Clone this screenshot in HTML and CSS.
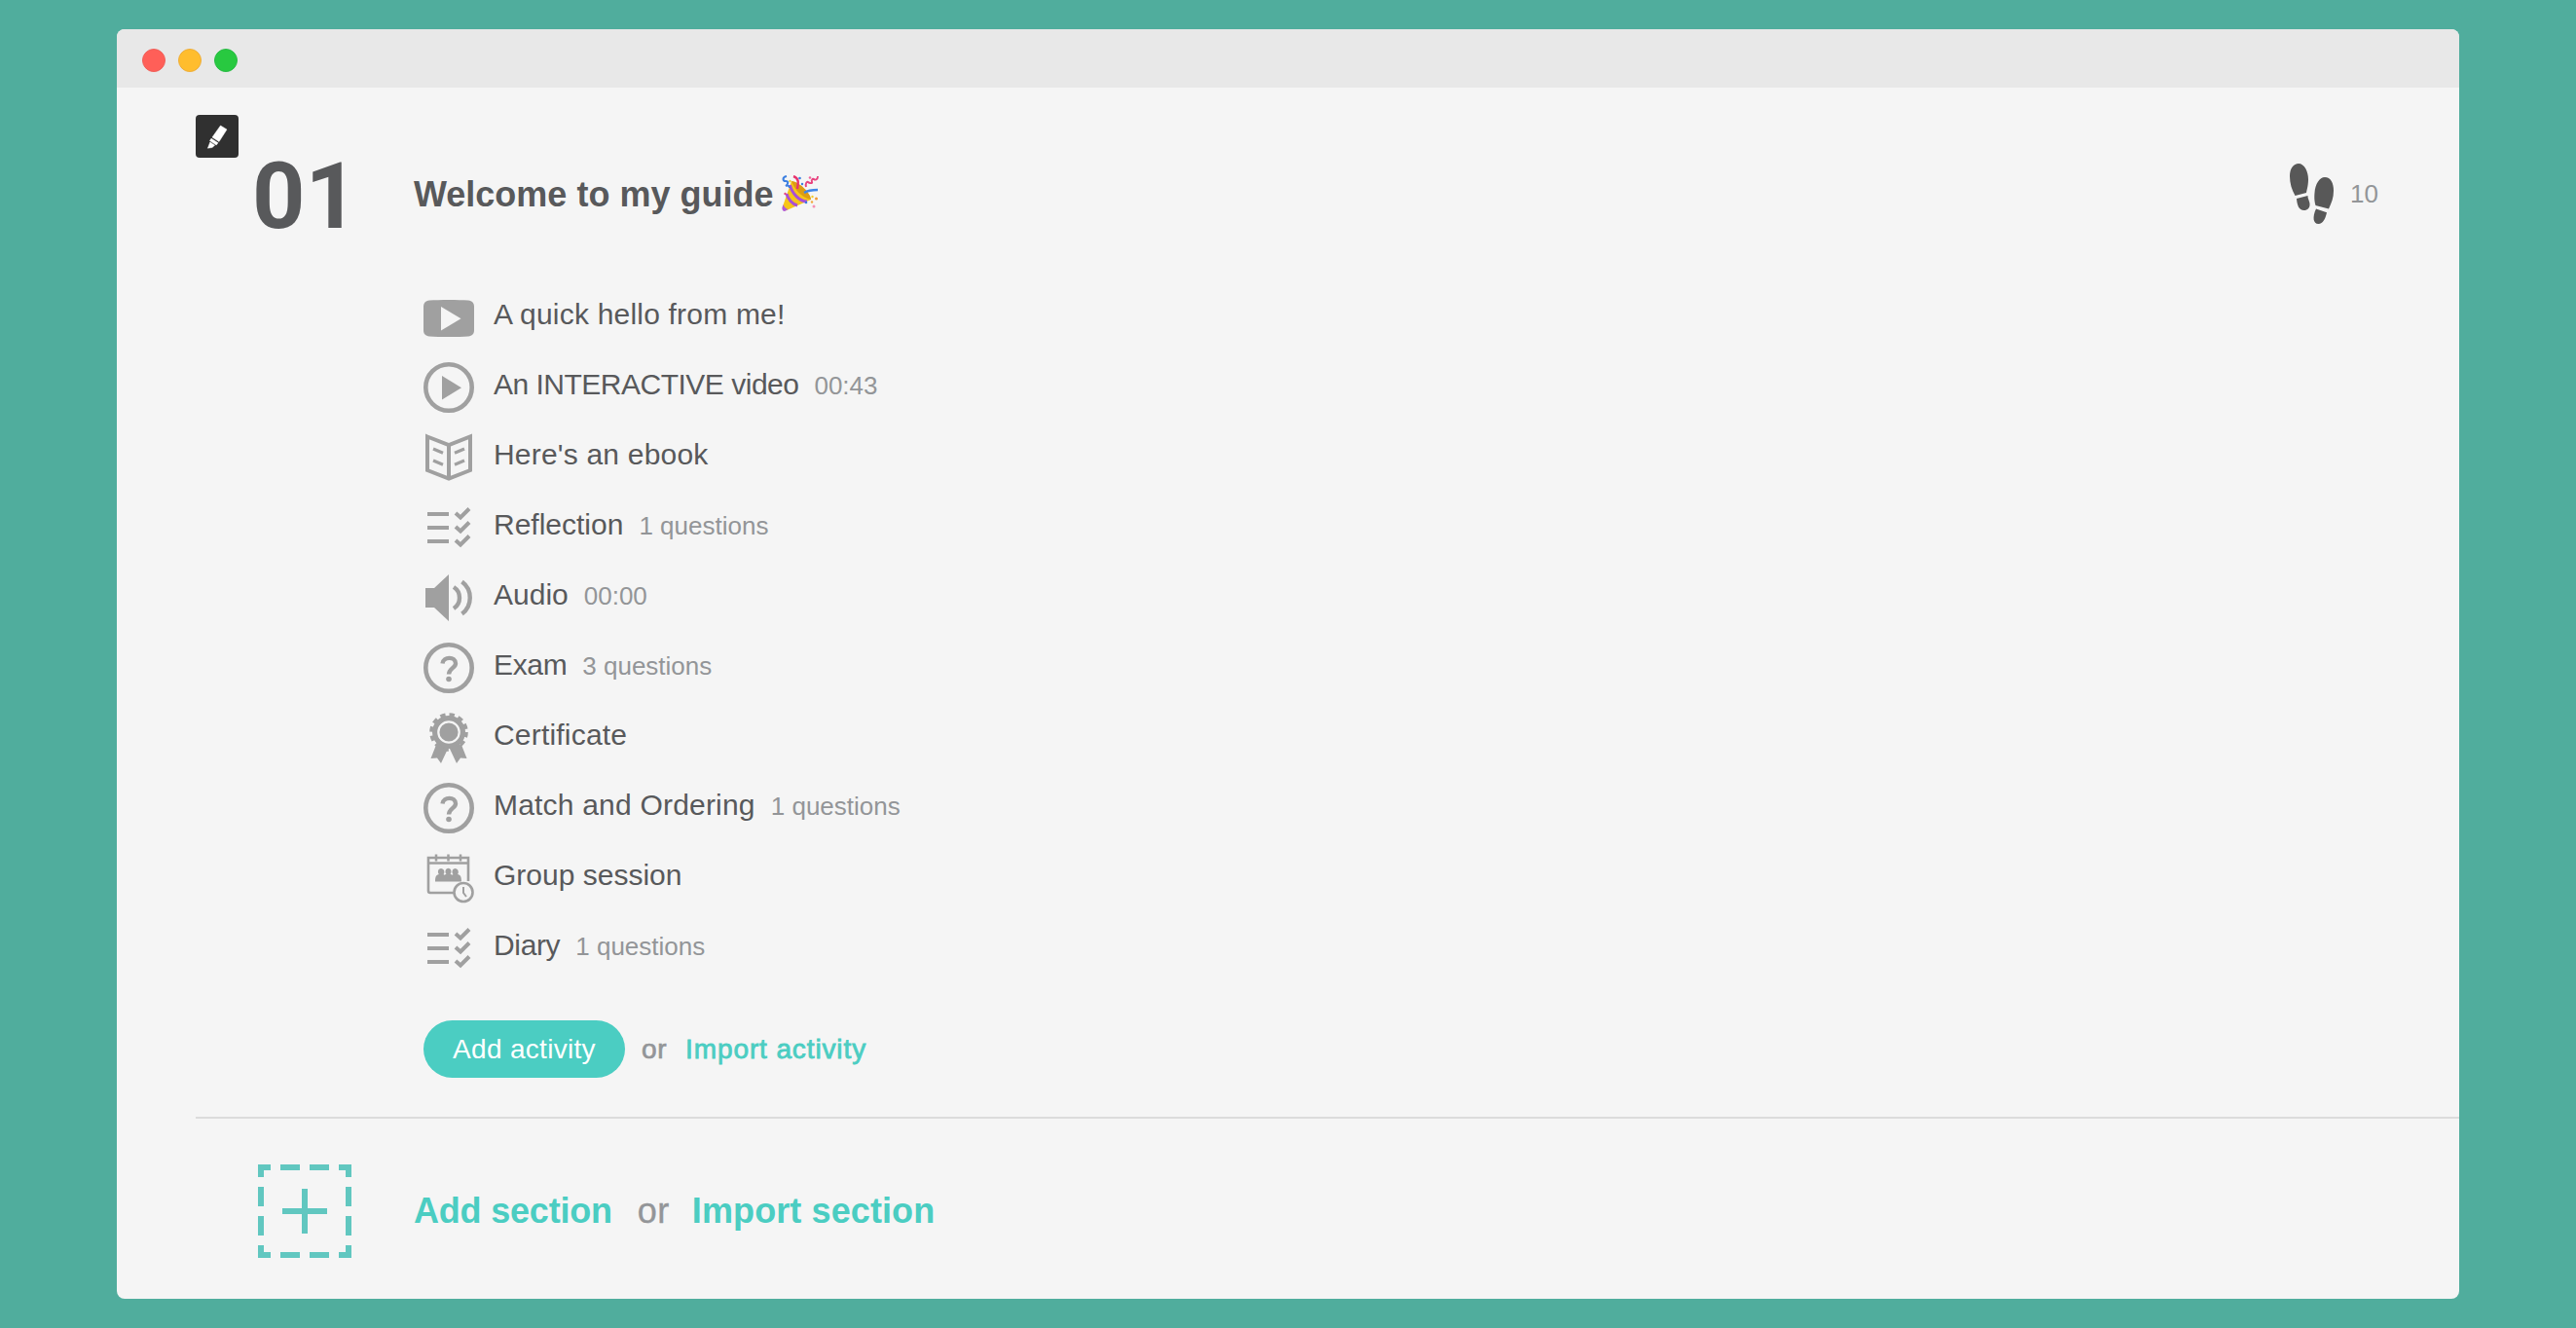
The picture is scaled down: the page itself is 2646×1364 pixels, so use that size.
FILE: index.html
```html
<!DOCTYPE html>
<html lang="en">
<head>
  <meta charset="UTF-8" />
  <meta name="viewport" content="width=device-width, initial-scale=1" />
  <title>Welcome to my guide</title>
  <link rel="stylesheet" href="styles.css">
</head>
<body>
  <svg class="sprite">
    <symbol id="icon-list" viewBox="0 0 52 52">
      <path d="M4 12h22M4 26h22M4 40h22M33 11l5 4.500 9-9M33 25l5 4.500 9-9M33 39l5 4.500 9-9" fill="none" stroke="currentColor" stroke-width="4" />
    </symbol>
    <symbol id="icon-question" viewBox="0 0 52 52">
      <circle cx="26" cy="26" r="23.700" fill="none" stroke="currentColor" stroke-width="4.600" />
      <path d="M19.500 21.500c.8-7.500 13.500-7.500 13.500 0 0 4.500-7 5-7 11" fill="none" stroke="currentColor" stroke-width="4.400" />
      <circle cx="26" cy="37.500" r="2.800" fill="currentColor" />
    </symbol>
  </svg>

  <main class="window">
    <div class="titlebar">
      <span class="dot red"></span>
      <span class="dot yellow"></span>
      <span class="dot green"></span>
    </div>

    <section class="section">
      <button class="edit-btn" aria-label="Edit">
        <svg viewBox="0 0 44 44">
          <path d="M25.500 11l6.500 4-8 12.500-7-4.500zM16 24.200l7 4.600-1.800 2.200-6.700-4.400zM14.800 28l4.800 3.200-2.600 2.300-4.600.700z" fill="#fff" stroke="#fff" stroke-width=".5" stroke-linejoin="round" />
        </svg>
      </button>

      <header class="section-header">
        <span class="number">01</span>
        <h1>Welcome to my guide</h1>
        <svg class="party" viewBox="0 0 38 38" aria-label="party popper">
          <path d="M10 6c7 2 17 11 20 19L5 36c-3 1-5-1-4-4z" fill="#f6c518" />
          <path d="M10 6c3 8 9 16 20 19 0-6-11-18-20-19z" fill="#dd9c12" />
          <path d="M8.500 10c2 9 10 17 17.500 17M5 19c1 5 6 11 11 12" fill="none" stroke="#a94fd6" stroke-width="3" />
          <path d="M1.500 30c1 2.500 2.500 4.500 5 5L3 37c-2 0-3-2-2.500-4z" fill="#b05ad8" />
          <path d="M12 1c6 2 5 7 4 13" fill="none" stroke="#e8336d" stroke-width="2.400" />
          <path d="M23 18c3-2 8-3 14-3" fill="none" stroke="#3f86e8" stroke-width="2.400" />
          <path d="M5 1c-5 1-4 5-1 5s3 3 0 5c2-1 4 0 4 2" fill="none" stroke="#3c7fe0" stroke-width="2" />
          <path d="M37 1c0 4-3 4-4 3s-3 1-2 3-3 1-4 0-3 1-2 5" fill="none" stroke="#e8437f" stroke-width="1.900" />
          <circle cx="18.500" cy="3" r="1.300" fill="#3c7fe0" />
          <circle cx="29" cy="2.500" r="1.300" fill="#f0649a" />
          <circle cx="21" cy="9" r="1.200" fill="#3c7fe0" />
          <circle cx="8.500" cy="6" r="1.200" fill="#e9d02c" />
          <circle cx="3.500" cy="19" r="1.200" fill="#e8437f" />
          <circle cx="31.500" cy="22" r="1.200" fill="#f3cd2b" />
          <circle cx="35.500" cy="24" r="1.500" fill="#f09a38" />
          <circle cx="25" cy="28" r="1.300" fill="#3c7fe0" />
          <circle cx="31" cy="27.500" r="1.200" fill="#f3a83b" />
          <circle cx="33" cy="32" r="1.500" fill="#f48fb5" />
        </svg>
        <div class="steps">
          <svg class="footprints" viewBox="0 0 46 62">
            <path d="M9 0c6 0 10 8 10 16 0 6-1 9-2 14L5.500 33C2 27 0 20 0 13 0 5 4 0 9 0zM7 36l11.500-3c0 4 2.500 6 2 10-.3 3-3 5-6 5-5 0-7-5-7.500-12z" fill="currentColor" />
            <path d="M36 14c6 0 9 6 9 14 0 7-2 12-5 18.500L26.500 43c-1-4-1.500-7-1-13 .6-9 5-16 10.500-16zM27 46.500l11 3.800C36.500 57 34 62 29.500 62 24 62 23 55 27 46.500z" fill="currentColor" />
          </svg>
          <span>10</span>
        </div>
      </header>

      <ul class="activities">
        <li>
          <svg viewBox="0 0 52 52"><path d="M6 8.500c10-.8 30-.8 40 0 4 .3 6 3 6 6.500v24c0 4-2 6-6 6.500-10 .8-30 .8-40 0-4-.5-6-2.500-6-6.500V15c0-3.500 2-6.200 6-6.500z" fill="currentColor" /><path d="M18 15v24.500l20.500-12.300z" fill="#f5f5f5" /></svg>
          <span class="label loose">A quick hello from me!</span>
        </li>
        <li>
          <svg viewBox="0 0 52 52"><circle cx="26" cy="26" r="23.700" fill="none" stroke="currentColor" stroke-width="4.600" /><path d="M19 14v24.500l20-12.300z" fill="currentColor" /></svg>
          <span class="label tight">An INTERACTIVE video</span>
          <span class="meta">00:43</span>
        </li>
        <li>
          <svg viewBox="0 0 52 52"><path d="M4 4.500L26 13l22-8.500v34.500L26 47.500 4 39zM26 13v34.500" fill="none" stroke="currentColor" stroke-width="4" /><path d="M10 17l10 4.200M10 29l10 4.200M42 17l-10 4.200M42 29l-10 4.200" fill="none" stroke="currentColor" stroke-width="3.200" /></svg>
          <span class="label loose">Here's an ebook</span>
        </li>
        <li>
          <svg><use href="#icon-list" /></svg>
          <span class="label">Reflection</span>
          <span class="meta">1 questions</span>
        </li>
        <li>
          <svg viewBox="0 0 52 52"><path d="M2 16h9L26 2v48L11 36H2z" fill="currentColor" /><path d="M31 15c8 5 8 17 0 22M39.500 9.500c11 8 11 25 0 33" fill="none" stroke="currentColor" stroke-width="4.400" /></svg>
          <span class="label">Audio</span>
          <span class="meta">00:00</span>
        </li>
        <li>
          <svg><use href="#icon-question" /></svg>
          <span class="label snug">Exam</span>
          <span class="meta">3 questions</span>
        </li>
        <li>
          <svg viewBox="0 0 52 52"><path d="M13 33L7.500 47l6.500-.5 4 5.500 7.500-16h1l7.500 16 4-5.500 6.500.5L39 33z" fill="currentColor" /><circle cx="26" cy="20" r="17" fill="currentColor" /><circle class="scallop" cx="26" cy="20" r="17.800" /><circle cx="26" cy="20" r="10.700" fill="none" stroke="#f5f5f5" stroke-width="2.200" /></svg>
          <span class="label loose">Certificate</span>
        </li>
        <li>
          <svg><use href="#icon-question" /></svg>
          <span class="label loose">Match and Ordering</span>
          <span class="meta">1 questions</span>
        </li>
        <li>
          <svg viewBox="0 0 52 52">
            <path d="M31 41H7q-2 0-2-2V5h41v24M5 10.500h41" fill="none" stroke="currentColor" stroke-width="2.600" />
            <path d="M13 1.500v7M25.500 1.500v7M38 1.500v7" stroke="currentColor" stroke-width="2.500" />
            <path d="M12 29.500c0-5 1-7 4-7.500-2-2-1-6 2-6s4.500 4 2.500 6l1 .8c.6-.5 1-.8 2-1.100-2-2-.8-6 2-6s4 4 2 6c1 .3 1.500.6 2 1.100l1-.8c-2-2-.8-6 2-6s4.500 4 2.500 6c3 .500 4 2.500 4 7.500z" fill="currentColor" />
            <circle cx="41" cy="40.500" r="9.500" fill="#f5f5f5" stroke="currentColor" stroke-width="2.600" />
            <path d="M41 35v6l3 4" fill="none" stroke="currentColor" stroke-width="2" />
          </svg>
          <span class="label">Group session</span>
        </li>
        <li>
          <svg><use href="#icon-list" /></svg>
          <span class="label snug">Diary</span>
          <span class="meta">1 questions</span>
        </li>
      </ul>

      <div class="activity-actions">
        <button class="add-activity">Add activity</button>
        <span class="or">or</span>
        <a class="import-activity">Import activity</a>
      </div>
    </section>

    <footer class="new-section">
      <svg class="add-box" viewBox="0 0 96 96">
        <path d="M0 13V0h13v6H6v7zM83 0h13v13h-6V6h-7zM96 83v13H83v-6h7v-7zM13 96H0V83h6v7h7z" fill="currentColor" />
        <path d="M23 3h20M53 3h20M23 93h20M53 93h20M3 23v20M3 53v20M93 23v20M93 53v20M25 48h46M48 25v46" fill="none" stroke="currentColor" stroke-width="6" />
      </svg>
      <a class="add-section">Add section</a>
      <span class="or">or</span>
      <a class="import-section">Import section</a>
    </footer>
  </main>
</body>
</html>
```
FILE: styles.css
```css
* {
  box-sizing: border-box;
}

body {
  margin: 0;
  height: 100vh;
  padding: 30px 120px;
  overflow: hidden;
  background: #50ad9d;
  color: #58595b;
  font-family: "Liberation Sans", Arial, sans-serif;
}

h1, ul {
  margin: 0;
  padding: 0;
}

button {
  border: none;
  padding: 0;
  font-family: inherit;
  cursor: pointer;
}

.sprite {
  display: none;
}

.window {
  height: 1304px;
  background: #f5f5f5;
  border-radius: 8px;
  overflow: hidden;
}

.titlebar {
  height: 60px;
  padding: 4px 0 0 26px;
  display: flex;
  align-items: center;
  gap: 13px;
  background: #e8e8e8;
}

.dot {
  width: 24px;
  height: 24px;
  border-radius: 50%;
}

.dot.red {
  background: #ff5f58;
  border: 1px solid #f0605a;
}

.dot.yellow {
  background: #ffbd2e;
  border: 1px solid #eeae3a;
}

.dot.green {
  background: #28c940;
  border: 1px solid #2abb46;
}

.section {
  position: relative;
  margin-left: 81px;
  padding: 59px 0 40px;
  border-bottom: 2px solid #dcdcdc;
}

.edit-btn {
  position: absolute;
  top: 28px;
  left: 0;
  width: 44px;
  height: 44px;
  border-radius: 4px;
  background: #303030;
}

.edit-btn svg {
  display: block;
}

.section-header {
  height: 100px;
  padding: 0 83px 0 57px;
  display: flex;
  align-items: center;
}

.number {
  width: 167px;
  padding: 5px 0 0 1px;
  font-family: Roboto, "Liberation Sans", sans-serif;
  font-size: 95px;
  font-weight: bold;
  line-height: 100px;
}

h1 {
  padding-top: 2px;
  font-size: 36px;
  line-height: 44px;
}

.party {
  width: 38px;
  height: 38px;
  margin-left: 9px;
}

.steps {
  margin-left: auto;
  display: flex;
  align-items: center;
  gap: 16px;
  color: #939598;
  font-size: 26px;
}

.footprints {
  width: 46px;
  height: 62px;
  color: #585858;
}

.activities {
  margin: 51px 0 28px 234px;
  list-style: none;
}

.activities li {
  height: 72px;
  display: flex;
  align-items: flex-start;
}

.activities svg {
  width: 52px;
  height: 52px;
  margin-right: 20px;
  color: #a0a0a0;
}

.scallop {
  fill: none;
  stroke: currentColor;
  stroke-width: 4;
  stroke-dasharray: 5.3 4.02;
}

.label {
  font-size: 30px;
  line-height: 45px;
}

.label.loose {
  letter-spacing: 0.2px;
}

.label.snug {
  letter-spacing: -0.35px;
}

.label.tight {
  letter-spacing: -0.5px;
}

.meta {
  margin-left: 16px;
  color: #939598;
  font-size: 26px;
  line-height: 48px;
}

.activity-actions {
  margin-left: 234px;
  height: 59px;
  display: flex;
  align-items: center;
  font-size: 28px;
}

.add-activity {
  width: 207px;
  height: 59px;
  border-radius: 30px;
  background: #4bcdc2;
  color: #fff;
  font-size: 28px;
  letter-spacing: 0.3px;
}

.or {
  color: #939598;
}

.activity-actions .or {
  margin: 0 19px 0 17px;
  letter-spacing: 0.6px;
  -webkit-text-stroke: 0.7px;
}

.import-activity {
  color: #4bcdc2;
  letter-spacing: 0.88px;
  -webkit-text-stroke: 0.8px;
}

.new-section {
  padding: 47px 0 0 145px;
  display: flex;
  align-items: center;
  font-size: 36px;
}

.add-box {
  width: 96px;
  height: 96px;
  margin-right: 64px;
  color: #61c7c0;
}

.add-section,
.import-section {
  color: #4bcdc2;
  font-weight: bold;
}

.add-section {
  letter-spacing: -0.2px;
}

.import-section {
  letter-spacing: 0.1px;
}

.new-section .or {
  margin: 0 23px 0 26px;
  letter-spacing: 0.5px;
  -webkit-text-stroke: 0.4px;
}
```
